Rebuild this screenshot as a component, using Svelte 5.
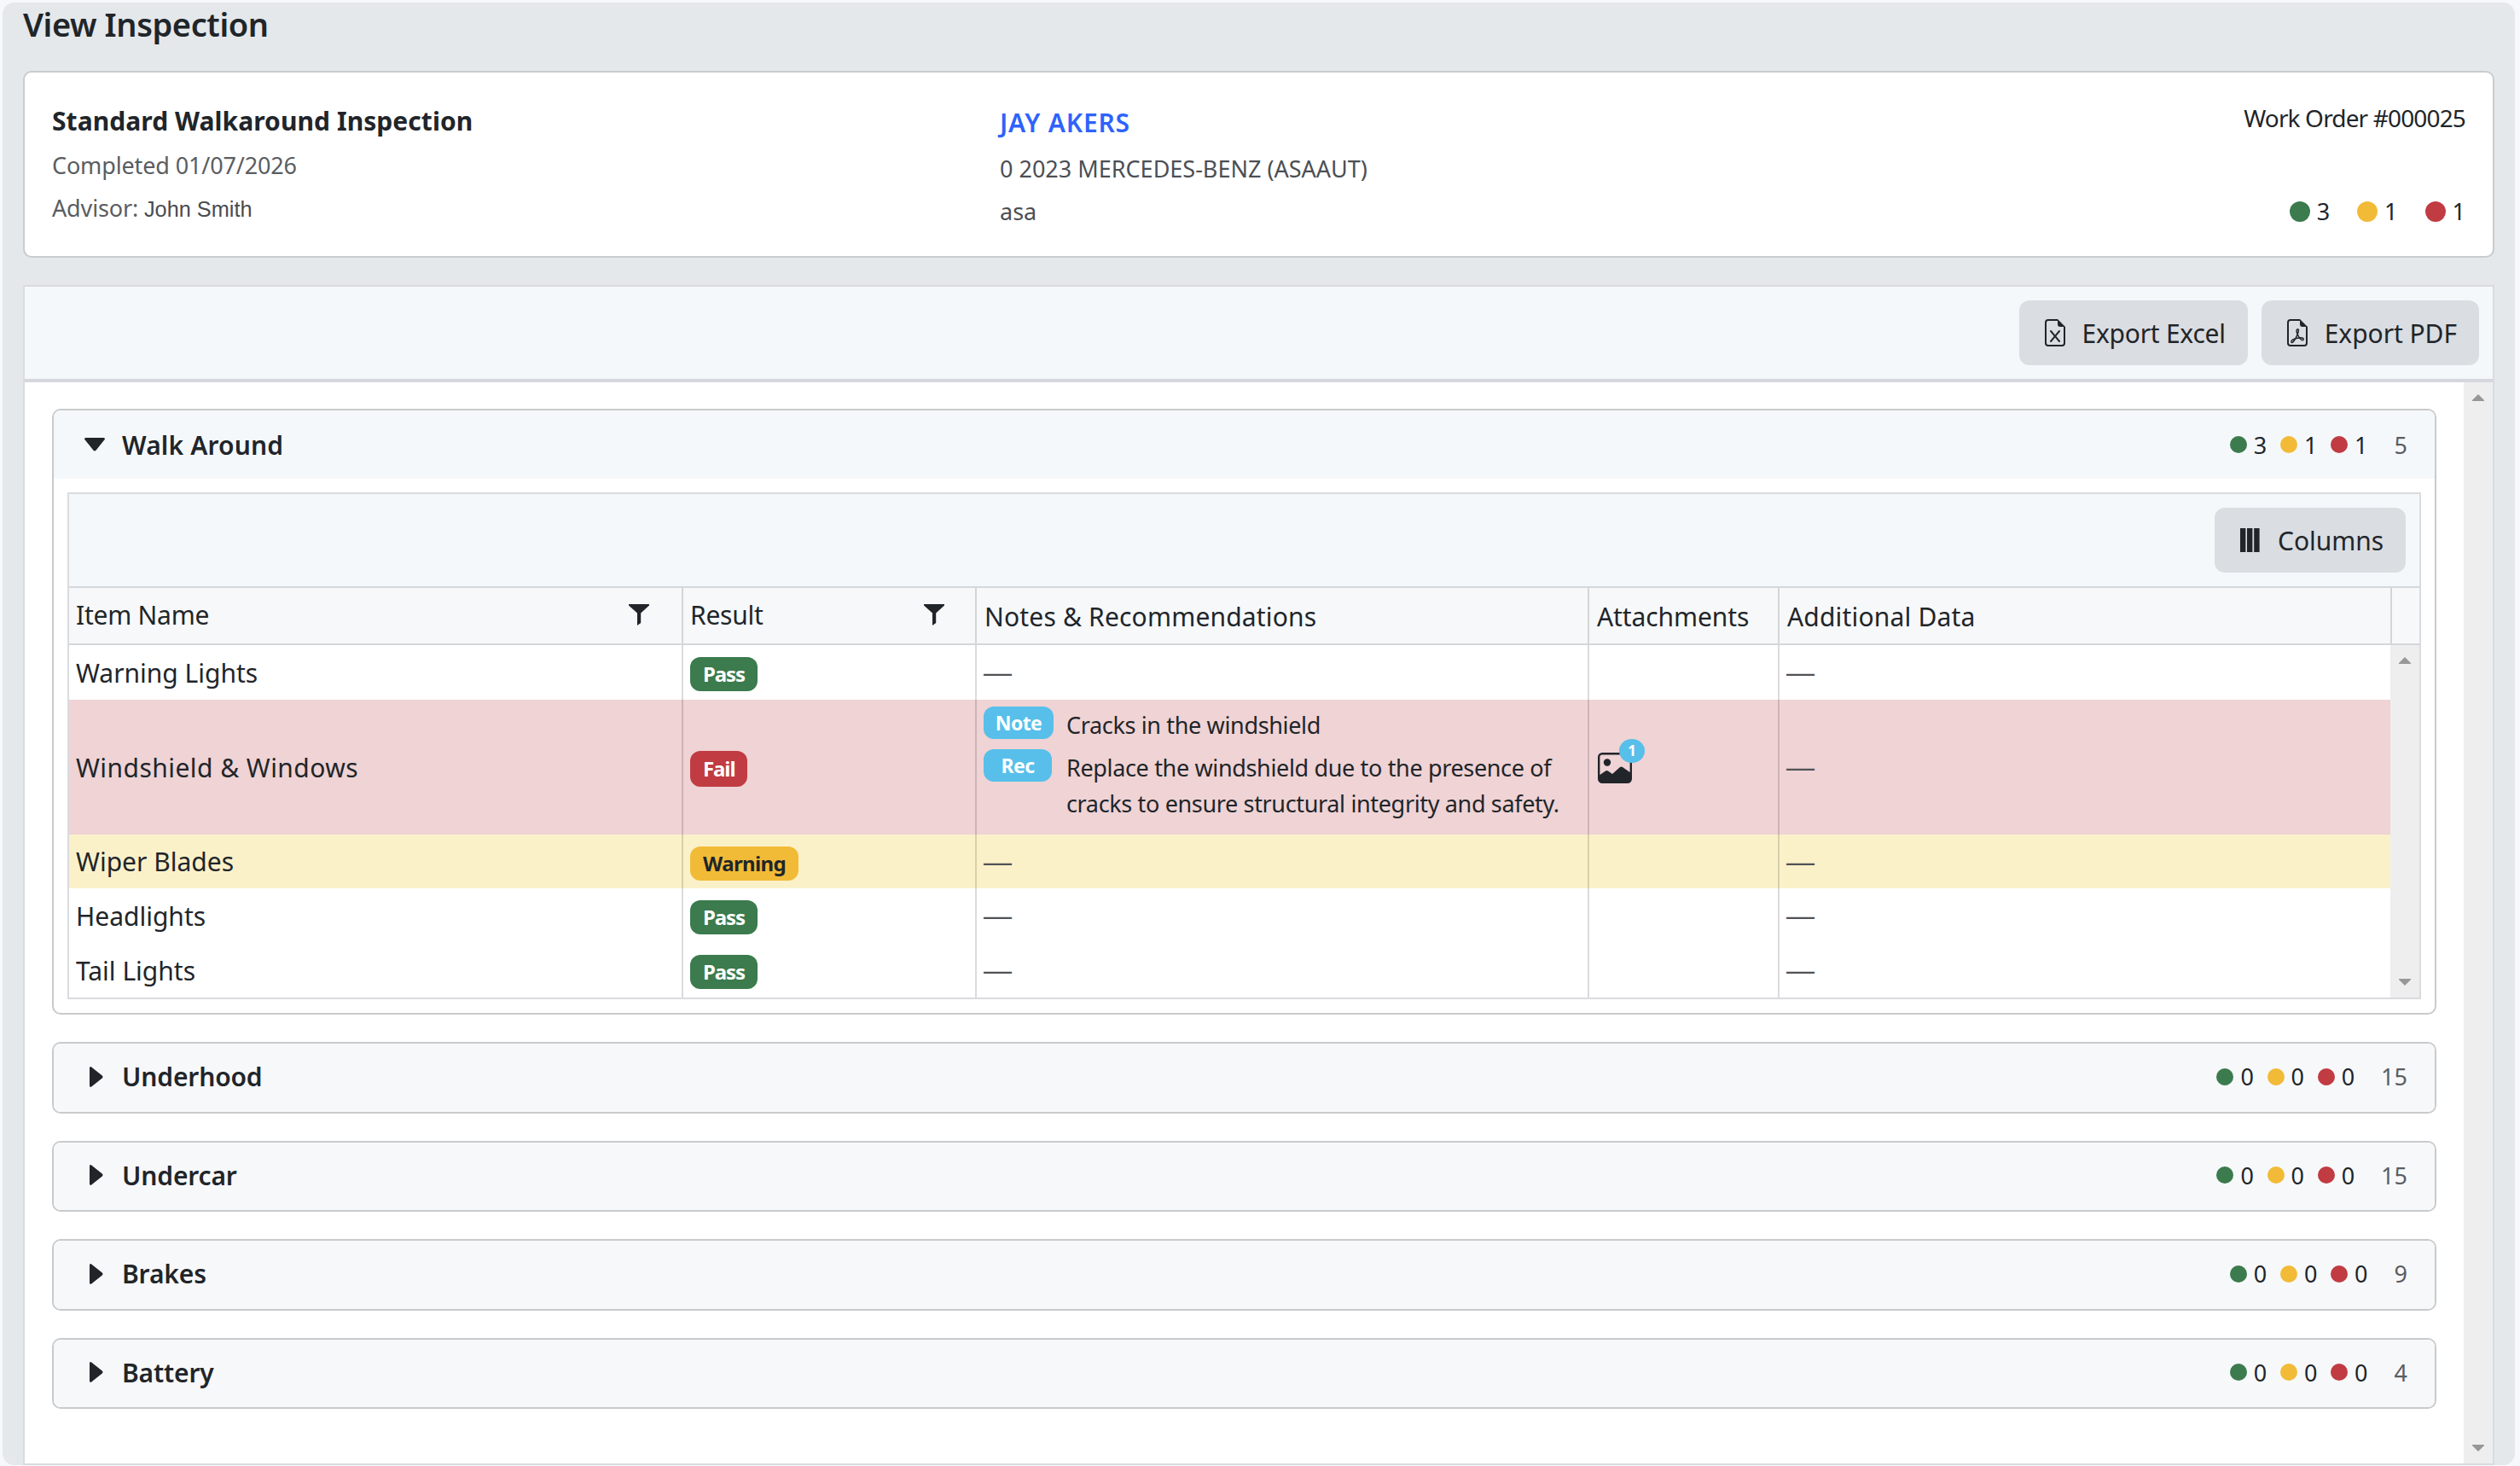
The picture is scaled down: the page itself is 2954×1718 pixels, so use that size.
<script lang="ts">
    type Status = "pass" | "warning" | "fail";

    interface Item {
        name: string;
        status: Status;
        note?: string;
        rec?: string;
        photos?: number;
    }

    interface Group {
        name: string;
        counts: number[];
        total: number;
        open: boolean;
        items: Item[];
    }

    const labels = { pass: "Pass", warning: "Warning", fail: "Fail" };
    const colors = ["green", "yellow", "red"];

    let groups: Group[] = [
        {
            name: "Walk Around",
            counts: [3, 1, 1],
            total: 5,
            open: true,
            items: [
                { name: "Warning Lights", status: "pass" },
                {
                    name: "Windshield & Windows",
                    status: "fail",
                    note: "Cracks in the windshield",
                    rec: "Replace the windshield due to the presence of cracks to ensure structural integrity and safety.",
                    photos: 1
                },
                { name: "Wiper Blades", status: "warning" },
                { name: "Headlights", status: "pass" },
                { name: "Tail Lights", status: "pass" }
            ]
        },
        { name: "Underhood", counts: [0, 0, 0], total: 15, open: false, items: [] },
        { name: "Undercar", counts: [0, 0, 0], total: 15, open: false, items: [] },
        { name: "Brakes", counts: [0, 0, 0], total: 9, open: false, items: [] },
        { name: "Battery", counts: [0, 0, 0], total: 4, open: false, items: [] }
    ];

    function toggle(group: Group) {
        group.open = !group.open;
        groups = groups;
    }
</script>

<div class="page">
    <h1>View Inspection</h1>

    <section class="summary">
        <div>
            <div class="summary-title">Standard Walkaround Inspection</div>
            <div class="muted">Completed 01/07/2026</div>
            <div class="muted advisor">Advisor: <span>John Smith</span></div>
        </div>
        <div>
            <div class="customer">JAY AKERS</div>
            <div class="vehicle">0 2023 MERCEDES-BENZ (ASAAUT)</div>
            <div class="vehicle">asa</div>
        </div>
        <div class="order">
            <div class="order-number">Work Order #000025</div>
            <div class="order-counts">
                {#each groups[0].counts as count, i}
                    <span class="count"><i class="dot {colors[i]}"></i>{count}</span>
                {/each}
            </div>
        </div>
    </section>

    <section class="panel">
        <div class="toolbar">
            <button>
                <svg width="32" height="32" viewBox="0 0 16 16">
                    <path d="M5.884 6.68a.5.5 0 1 0-.768.64L7.349 10l-2.233 2.68a.5.5 0 0 0 .768.64L8 10.781l2.116 2.54a.5.5 0 0 0 .768-.641L8.651 10l2.233-2.68a.5.5 0 0 0-.768-.64L8 9.219l-2.116-2.54z" />
                    <path d="M14 14V4.5L9.5 0H4a2 2 0 0 0-2 2v12a2 2 0 0 0 2 2h8a2 2 0 0 0 2-2M9.5 3A1.5 1.5 0 0 0 11 4.5h2V14a1 1 0 0 1-1 1H4a1 1 0 0 1-1-1V2a1 1 0 0 1 1-1h5.5z" />
                </svg>
                <span class="excel">Export Excel</span>
            </button>
            <button>
                <svg width="32" height="32" viewBox="0 0 16 16">
                    <path d="M14 14V4.5L9.5 0H4a2 2 0 0 0-2 2v12a2 2 0 0 0 2 2h8a2 2 0 0 0 2-2M9.5 3A1.5 1.5 0 0 0 11 4.5h2V14a1 1 0 0 1-1 1H4a1 1 0 0 1-1-1V2a1 1 0 0 1 1-1h5.5z" />
                    <path d="M4.603 14.087a.81.81 0 0 1-.438-.42c-.195-.388-.13-.776.08-1.102.198-.307.526-.568.897-.787a7.68 7.68 0 0 1 1.482-.645 19.697 19.697 0 0 0 1.062-2.227 7.269 7.269 0 0 1-.43-1.295c-.086-.4-.119-.796-.046-1.136.075-.354.274-.672.65-.823.192-.077.4-.12.602-.077a.7.7 0 0 1 .477.365c.088.164.12.356.127.538.007.188-.012.396-.047.614-.084.51-.27 1.134-.52 1.794a10.954 10.954 0 0 0 .98 1.686 5.753 5.753 0 0 1 1.334.05c.364.066.734.195.96.465.12.144.193.32.2.518.007.192-.047.382-.138.563a1.04 1.04 0 0 1-.354.416.856.856 0 0 1-.51.138c-.331-.014-.654-.196-.933-.417a5.712 5.712 0 0 1-.911-.95 11.651 11.651 0 0 0-1.997.406 11.307 11.307 0 0 1-1.02 1.51c-.292.35-.609.656-.927.787a.793.793 0 0 1-.58.029zm1.379-1.901c-.166.076-.32.156-.459.238-.328.194-.541.383-.647.547-.094.145-.096.25-.04.361.01.022.02.036.026.044a.266.266 0 0 0 .035-.012c.137-.056.355-.235.635-.572a8.18 8.18 0 0 0 .45-.606zm1.64-1.33a12.71 12.71 0 0 1 1.01-.193 11.744 11.744 0 0 1-.51-.858 20.801 20.801 0 0 1-.5 1.05zm2.446.45c.15.163.296.3.435.41.24.19.407.253.498.256a.107.107 0 0 0 .07-.015.307.307 0 0 0 .094-.125.436.436 0 0 0 .059-.2.095.095 0 0 0-.026-.063c-.052-.062-.2-.152-.518-.209a3.876 3.876 0 0 0-.612-.053zM8.078 7.8a6.7 6.7 0 0 0 .2-.828c.031-.188.043-.343.038-.465a.613.613 0 0 0-.032-.198.517.517 0 0 0-.145.04c-.087.035-.158.106-.196.283-.04.192-.03.469.046.822.024.111.054.227.09.346z" />
                </svg>
                <span>Export PDF</span>
            </button>
        </div>

        <div class="panel-body">
            <div class="groups">
                {#each groups as group}
                    <div class="group" class:open={group.open}>
                        <!-- svelte-ignore a11y_click_events_have_key_events -->
                        <!-- svelte-ignore a11y_no_static_element_interactions -->
                        <div class="group-header" on:click={() => toggle(group)}>
                            <span class="caret">
                                {#if group.open}
                                    <svg width="24" height="16" viewBox="0 0 24 16"><path d="M1.5 0h21Q25 .5 23.3 2.5L13.5 14.8Q12 16.2 10.5 14.8L.7 2.5Q-1 .5 1.5 0z" /></svg>
                                {:else}
                                    <svg class="right" width="16" height="24" viewBox="0 0 16 24"><path d="M0 1.5Q.5-1 2.5.7L14.8 10.5Q16.2 12 14.8 13.5L2.5 23.3Q.5 25 0 22.5z" /></svg>
                                {/if}
                            </span>
                            <span class="group-name">{group.name}</span>
                            <span class="group-counts">
                                {#each group.counts as count, i}
                                    <span class="count"><i class="dot {colors[i]}"></i>{count}</span>
                                {/each}
                            </span>
                            <span class="total">{group.total}</span>
                        </div>

                        {#if group.open}
                            <div class="table">
                                <div class="table-toolbar">
                                    <button>
                                        <svg class="bars" width="24" height="28" viewBox="0 0 24 28"><path d="M0 0h6.4v28H0zM8 0h6.4v28H8zM16.2 0h6.4v28h-6.4z" /></svg>
                                        <span>Columns</span>
                                    </button>
                                </div>
                                <div class="row head">
                                    <div class="cell sortable name">
                                        Item Name
                                        <svg width="24" height="25" viewBox="0 0 24 25"><path d="M0 0h24v1.5L14.2 10.5V22L10 25V10.5L0 1.5z" /></svg>
                                    </div>
                                    <div class="cell sortable">
                                        Result
                                        <svg width="24" height="25" viewBox="0 0 24 25"><path d="M0 0h24v1.5L14.2 10.5V22L10 25V10.5L0 1.5z" /></svg>
                                    </div>
                                    <div class="cell">Notes &amp; Recommendations</div>
                                    <div class="cell attachments">Attachments</div>
                                    <div class="cell">Additional Data</div>
                                </div>
                                <div class="table-body">
                                    <div class="rows">
                                        {#each group.items as item}
                                            <div class="row {item.status}">
                                                <div class="cell">{item.name}</div>
                                                <div class="cell"><span class="badge {item.status}">{labels[item.status]}</span></div>
                                                <div class="cell">
                                                    {#if item.note}
                                                        <div class="notes">
                                                            <span class="badge info note">Note</span>
                                                            <p>{item.note}</p>
                                                            <span class="badge info">Rec</span>
                                                            <p>{item.rec}</p>
                                                        </div>
                                                    {:else}
                                                        <span class="dash">—</span>
                                                    {/if}
                                                </div>
                                                <div class="cell">
                                                    {#if item.photos}
                                                        <span class="photo">
                                                            <svg width="40" height="36" viewBox="0 0 40 36">
                                                                <rect x="1.2" y="1.2" width="37.6" height="33.6" rx="4" fill="none" stroke="#212529" stroke-width="2.4" />
                                                                <circle cx="11" cy="11.5" r="4.2" />
                                                                <path d="M1 27l8-5.5q1.5-.8 3 0l5 3.5L26 17q1.5-1.2 3 0l10 7v7q0 4-4 4H5q-4 0-4-4z" />
                                                            </svg>
                                                            <span class="photo-count">{item.photos}</span>
                                                        </span>
                                                    {/if}
                                                </div>
                                                <div class="cell"><span class="dash">—</span></div>
                                            </div>
                                        {/each}
                                    </div>
                                    <div class="scrollbar">
                                        <svg width="14" height="8" viewBox="0 0 14 8"><path d="M7 0l7 7v1H0V7z" /></svg>
                                        <svg width="14" height="8" viewBox="0 0 14 8"><path d="M0 0h14v1L7 8 0 1z" /></svg>
                                    </div>
                                </div>
                            </div>
                        {/if}
                    </div>
                {/each}
            </div>
            <div class="scrollbar">
                <svg width="14" height="8" viewBox="0 0 14 8"><path d="M7 0l7 7v1H0V7z" /></svg>
                <svg width="14" height="8" viewBox="0 0 14 8"><path d="M0 0h14v1L7 8 0 1z" /></svg>
            </div>
        </div>
    </section>
</div>

<style>
    :global(body) {
        margin: 0;
        background: #f6f8fb;
    }
    :global(#app) {
        display: flow-root;
        height: 1718px;
        overflow: hidden;
    }
    .page {
        box-sizing: border-box;
        width: 2945px;
        height: 1714px;
        margin: 3px 0 0 3px;
        padding: 0 24px;
        display: flex;
        flex-direction: column;
        background: #e4e8eb;
        border-radius: 14px;
        color: #212529;
        font-family: "Noto Sans", "Open Sans", sans-serif;
        font-size: 30px;
    }
    h1 {
        margin: 0 0 30px;
        font-size: 38px;
        font-weight: 600;
        line-height: 50px;
        letter-spacing: -.4px;
    }

    .summary {
        box-sizing: border-box;
        height: 219px;
        padding: 33px 32px 0;
        display: grid;
        grid-template-columns: 1111px 1fr auto;
        background: white;
        border: 2px solid #cacbcd;
        border-radius: 10px;
    }
    .summary-title {
        font-weight: 700;
        line-height: 48px;
        letter-spacing: .06px;
        margin-bottom: 3px;
    }
    .muted, .vehicle {
        font-size: 27px;
        line-height: 50px;
        color: #5a5d61;
    }
    .muted {
        letter-spacing: -.14px;
    }
    .advisor span {
        font-family: "Liberation Sans", Arial, sans-serif;
        font-size: 25.3px;
        letter-spacing: 0;
        color: #4a4c50;
    }
    .customer {
        line-height: 51px;
        margin-bottom: 4px;
        font-weight: 600;
        letter-spacing: .8px;
        color: #2f62fb;
    }
    .vehicle {
        color: #4c4f53;
    }
    .order {
        margin-top: -1px;
        font-size: 28px;
        line-height: 42px;
    }
    .order-number {
        letter-spacing: -.85px;
    }
    .order-counts {
        display: flex;
        justify-content: flex-end;
        gap: 32px;
        margin-top: 68px;
        font-size: 27px;
    }
    .count {
        display: flex;
        align-items: center;
        gap: 8px;
    }
    .dot {
        width: 20px;
        height: 20px;
        border-radius: 50%;
    }
    .order-counts .dot {
        width: 24px;
        height: 24px;
    }
    .green { background: #3b7b4d; }
    .yellow { background: #f2bb37; }
    .red { background: #c13b42; }

    .panel {
        flex: 1;
        min-height: 0;
        margin-top: 32px;
        display: flex;
        flex-direction: column;
        background: white;
        border: 2px solid #d9dbde;
    }
    .toolbar, .table-toolbar {
        height: 108px;
        padding-right: 16px;
        display: flex;
        align-items: center;
        justify-content: flex-end;
        gap: 16px;
        background: #f5f8fb;
        border-bottom: 4px solid #d4d7db;
    }
    button {
        height: 76px;
        padding: 0 26px;
        display: flex;
        align-items: center;
        gap: 16px;
        border: 0;
        border-radius: 12px;
        background: #dadde2;
        color: #212529;
        font: inherit;
        letter-spacing: -.05px;
    }
    .excel {
        letter-spacing: -.25px;
    }
    .bars {
        margin: 0 4px;
    }

    .panel-body {
        flex: 1;
        min-height: 0;
        display: flex;
    }
    .groups {
        flex: 1;
        padding: 31px 32px 0;
    }
    .group {
        margin-bottom: 32px;
        border: 2px solid #c9cacc;
        border-radius: 10px;
        overflow: hidden;
    }
    .group-header {
        box-sizing: border-box;
        height: 79.5px;
        padding: 0 32px 2px 36px;
        display: flex;
        align-items: center;
        background: #f7f8fa;
    }
    .open .group-header {
        height: 80px;
        padding-bottom: 0;
        background: #f5f8fb;
    }
    svg {
        display: block;
        fill: #212529;
    }
    .caret {
        width: 44px;
    }
    .right {
        margin-left: 6px;
    }
    .group-name {
        flex: 1;
        font-weight: 600;
        letter-spacing: -.15px;
    }
    .open .group-name {
        letter-spacing: .15px;
    }
    .group-counts {
        display: flex;
        gap: 15.7px;
        font-size: 27px;
    }
    .total {
        margin-left: 31px;
        font-size: 27px;
        color: #5a5d61;
    }

    .table {
        margin: 16px;
        border: 2px solid #d9dbde;
    }
    .table-toolbar {
        border-bottom-width: 2px;
    }
    .row {
        display: grid;
        grid-template-columns: 720px 344px 718px 223px 716px;
        min-height: 64px;
    }
    .head {
        grid-template-columns: 720px 344px 718px 223px 718px;
        min-height: 65px;
        background: #f7f8fa;
        border-bottom: 2px solid #d4d7da;
    }
    .cell {
        display: flex;
        align-items: center;
        padding: 0 8px;
        border-right: 2px solid rgba(0, 0, 0, .14);
    }
    .head .cell {
        padding: 1px 8px 0 9px;
        letter-spacing: .18px;
    }
    .head .attachments {
        letter-spacing: -.1px;
    }
    .head .sortable {
        justify-content: space-between;
        padding: 0 36px 2px 8px;
        letter-spacing: -.25px;
    }
    .head .name {
        padding-right: 38px;
    }
    .rows .cell:last-child {
        border-right: 0;
    }
    .row.fail { background: #efd3d5; }
    .row.fail .cell:first-child { letter-spacing: .45px; }
    .row.warning {
        min-height: 63px;
        background: #fbf1c9;
    }
    .badge {
        box-sizing: border-box;
        height: 40px;
        margin-top: 4px;
        padding: 0 15px;
        border-radius: 12px;
        font-size: 24px;
        font-weight: 700;
        line-height: 40px;
        letter-spacing: -1.1px;
        color: white;
    }
    .badge.pass { background: #3b7b4d; }
    .badge.fail {
        height: 42px;
        line-height: 42px;
        background: #c13b42;
    }
    .badge.warning {
        letter-spacing: -.6px;
        background: #f2bb37;
        color: #212529;
    }
    .badge.info {
        width: 80px;
        height: 38px;
        margin: 0;
        padding: 0;
        text-align: center;
        line-height: 38px;
        font-size: 23px;
        letter-spacing: -.6px;
        background: #57bfea;
    }
    .badge.note { width: 82px; }
    .notes {
        display: grid;
        grid-template-columns: 97px 1fr;
        row-gap: 8px;
        padding: 8px 0 16px;
        font-size: 27px;
        line-height: 42px;
        letter-spacing: -.35px;
    }
    p {
        margin: 1px 0 -1px;
    }
    .dash {
        font-family: "Liberation Sans", Arial, sans-serif;
        font-size: 33px;
        color: #505256;
    }
    .photo {
        position: relative;
        margin: 2px 0 0 2px;
    }
    .photo-count {
        position: absolute;
        top: -16px;
        right: -15px;
        width: 30px;
        height: 28px;
        border-radius: 50%;
        background: #57bfea;
        color: white;
        font-size: 17px;
        font-weight: 700;
        line-height: 28px;
        text-align: center;
    }

    .table-body {
        display: flex;
    }
    .rows {
        width: 2721px;
    }
    .scrollbar {
        width: 34px;
        box-sizing: border-box;
        padding: 14px 0;
        display: flex;
        flex-direction: column;
        align-items: center;
        justify-content: space-between;
        background: #eeeeee;
    }
    .scrollbar svg {
        fill: #979797;
    }
</style>
